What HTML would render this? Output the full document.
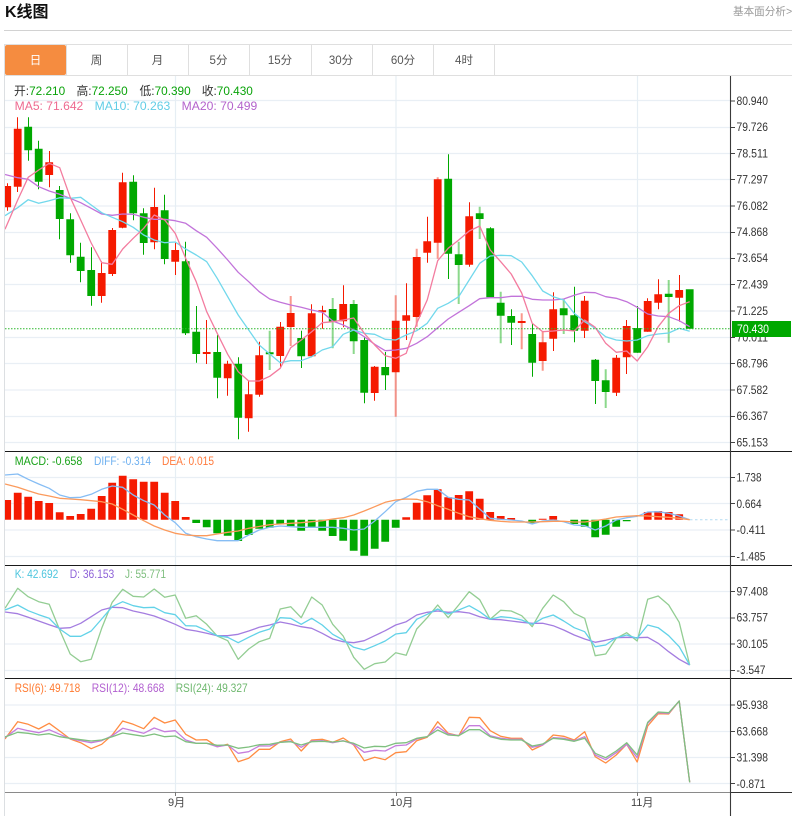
<!DOCTYPE html>
<html lang="zh"><head><meta charset="utf-8"><title>K线图</title>
<style>
html,body{margin:0;padding:0;background:#fff;width:792px;height:816px;overflow:hidden}
svg{display:block}
text{font-family:"Liberation Sans","Noto Sans CJK SC",sans-serif}
.ax text{font-size:11.5px;fill:#333}
.l{fill:none;stroke-width:1.3;stroke-linejoin:round}
.tab{font-size:11.5px;fill:#555;text-anchor:middle}
.lg{font-size:11.8px}
</style></head><body>
<svg width="792" height="816" viewBox="0 0 792 816" xmlns="http://www.w3.org/2000/svg">
<defs><clipPath id="c"><rect x="5" y="76" width="725.5" height="716"/></clipPath></defs>
<rect width="792" height="816" fill="#fff"/>
<text x="5" y="17" style="font-size:16px;font-weight:700" fill="#111">K线图</text>
<text x="733" y="15" style="font-size:10.6px" fill="#999">基本面分析&gt;</text>
<path d="M4 30.5H792" stroke="#d2d2d2"/>
<!-- tabs -->
<path d="M4 44.5H792M4 75.5H792" stroke="#dfdfdf"/>
<path d="M4.5 44V816" stroke="#dcdfe2"/>
<path d="M66.5 45V75M127.5 45V75M188.5 45V75M249.5 45V75M311.5 45V75M372.5 45V75M433.5 45V75M494.5 45V75" stroke="#dfdfdf"/>
<rect x="5" y="45" width="61" height="30" rx="2" fill="#f58c40"/>
<text class="tab" x="35.5" y="64" style="fill:#fff">日</text>
<text class="tab" x="96.5" y="64">周</text>
<text class="tab" x="157.5" y="64">月</text>
<text class="tab" x="218.5" y="64">5分</text>
<text class="tab" x="280" y="64">15分</text>
<text class="tab" x="341" y="64">30分</text>
<text class="tab" x="403" y="64">60分</text>
<text class="tab" x="464" y="64">4时</text>
<!-- grid -->
<path d="M5 100.5H730M5 127.5H730M5 153.5H730M5 179.5H730M5 206H730M5 232.5H730M5 258.5H730M5 284.5H730M5 311H730M5 337.5H730M5 363.5H730M5 390H730M5 416.5H730M5 442.5H730M5 477.5H730M5 503.5H730M5 530H730M5 556.5H730M5 591.5H730M5 618H730M5 644H730M5 670.5H730M5 705H730M5 731.5H730M5 757.5H730M5 783.5H730" stroke="#e9eff5" stroke-width="1.2"/>
<path d="M175.5 76V792M396 76V792M637.5 76V792" stroke="#e6eef4" stroke-width="1.2"/>
<g clip-path="url(#c)">
<path fill="none" stroke="#f51a00" d="M7.5 183.3V210.7M17.5 117.3V192M49.5 151V187.3M101.5 261.3V302.7M112.5 228V276M122.5 172.7V228.3M154.5 187.7V249.3M175.5 242.7V275M206.5 320V364M227.5 360.7V395.7M248.5 380.7V431.7M259.5 341.7V396.7M280.5 322V366.7M311.5 304.3V357.3M322.5 305.7V328.7M343.5 285.3V327.3M374.5 366V400.7M406.5 283.3V340M427.5 216.7V262.7M469.5 202.3V266.7M553.5 292.3V351M584.5 296V338M616.5 355V396M626.5 320V374M647.5 298.3V331.7M658.5 279.3V309.3M679.5 275V321.7"/>
<path fill="none" stroke="#f51a00" stroke-width="2" stroke-opacity=".45" d="M290.7 296V346M395.7 295.3V416.7M416.7 248.7V326.7M437.7 177.3V258.7M521.7 313.3V349.3M542.7 331.7V370.7"/>
<path fill="none" stroke="#00a800" d="M28.5 117.3V160.7M38.5 140.7V189.3M59.5 186V239.3M70.5 213.3V262.7M80.5 242.7V282.3M91.5 247.3V305.7M133.5 175.3V220.3M143.5 208.3V254.7M164.5 194.7V264.3M185.5 241.7V335M196.5 306V362.7M217.5 335V398.3M238.5 357.3V439.3M301.5 330.7V368M364.5 337.3V403.3M385.5 352V390M448.5 154.3V279M490.5 227.3V298M511.5 309.3V345M532.5 323.3V376.7M574.5 286.7V342.3M595.5 359V404M637.5 306V352.7"/>
<path fill="none" stroke="#00a800" stroke-width="2" stroke-opacity=".45" d="M269.7 330.7V370M332.7 298V348.3M353.7 300V354M458.7 241.7V304M479.7 206.7V239M500.7 291.7V343.3M563.7 299V334M605.7 369.3V408M668.7 280V342.7"/>
<path fill="none" stroke="#f51a00" stroke-width="7.8" d="M7.2 186V207.3M17.7 128.7V186.7M49.2 162.3V175M101.7 273V296M112.2 230V274M122.7 182.3V227.7M154.2 207V242.3M175.2 250V261.7M206.7 352V354M227.7 363.7V378.3M248.7 394.3V418.3M259.2 355.3V394.7M280.2 326.7V356M290.7 313V327M311.7 313.3V356.3M322.2 310.3V312.3M343.2 304V321.3M374.7 366.7V393M395.7 320.7V372.3M406.2 315.3V320.7M416.7 257V317M427.2 241.3V252.7M437.7 179.3V242.7M469.2 216.3V264.7M521.7 321V323M542.7 342.3V361M553.2 309.3V338.7M584.7 300.7V330.7M616.2 357.7V392.7M626.7 326V357.3M647.7 301V331.7M658.2 294.3V302.7M679.2 290V297.7"/>
<path fill="none" stroke="#00a800" stroke-width="7.8" d="M28.2 126.7V150.3M38.7 148.7V181.7M59.7 190V219M70.2 219.3V255.3M80.7 256.7V271M91.2 270V296M133.2 181.7V213.3M143.7 213.3V243M164.7 210.3V259M185.7 261.3V333.3M196.2 331.7V354M217.2 352V377.7M238.2 363.7V417.7M269.7 352.3V354.3M301.2 338V356.3M332.7 309V321.7M353.7 304V341.3M364.2 340V392.7M385.2 367V375.3M448.2 178.7V253.7M458.7 254.3V265M479.7 213.3V219M490.2 228.3V297.3M500.7 302.7V315.7M511.2 316V322.7M532.2 334V362.7M563.7 308.3V315.3M574.2 315.3V330.7M595.2 359.7V381M605.7 380.3V392M637.2 328V352.7M668.7 293.7V297M689.7 289.3V328.7"/>
<polyline class="l" stroke="#c274da" points="5,174.5 17.7,177.7 28.2,179.3 38.7,186.7 49.2,191 59.7,194.3 70.2,198.3 80.7,202.7 91.2,208.3 101.7,214 112.2,215.3 122.7,214 133.2,214.3 143.7,217.3 154.2,219.3 164.7,219.3 175.2,220.7 185.7,223.3 196.2,230.7 206.7,237.3 217.2,248.3 227.7,260 238.2,272.3 248.7,281.7 259.2,291.7 269.7,299 280.2,302.3 290.7,305 301.2,307.3 311.7,310 322.2,312.3 332.7,321 343.2,325 353.7,330 364.2,336.7 374.7,344.3 385.2,350.7 395.7,350 406.2,348.3 416.7,343.3 427.2,336.7 437.7,327.7 448.2,319 458.7,312.3 469.2,305.7 479.7,298.7 490.2,297.7 500.7,297.7 511.2,296.3 521.7,296.3 532.2,299.3 542.7,300 553.2,300 563.7,299 574.2,295.3 584.7,292.3 595.2,292.7 605.7,296.7 616.2,298.3 626.7,301.7 637.2,307.3 647.7,314 658.2,316 668.7,316.7 679.2,320.7 689.7,326.7"/>
<polyline class="l" stroke="#72d8ec" points="5,215.7 17.7,207.7 28.2,199.7 38.7,203.3 49.2,200.7 59.7,197.7 70.2,198.3 80.7,197.3 91.2,205 101.7,212.7 112.2,217.3 122.7,221.7 133.2,227.3 143.7,235 154.2,240 164.7,242.7 175.2,242 185.7,249 196.2,255 206.7,261.7 217.2,278.3 227.7,296.7 238.2,315 248.7,330 259.2,345 269.7,354 280.2,362.7 290.7,360.7 301.2,360.7 311.7,356.7 322.2,350 332.7,346.7 343.2,334.3 353.7,330 364.2,333.3 374.7,334.3 385.2,339.3 395.7,340 406.2,335 416.7,330.7 427.2,323.3 437.7,308.3 448.2,303.3 458.7,296.7 469.2,280 479.7,263.3 490.2,256 500.7,255.3 511.2,255.7 521.7,262 532.2,275.7 542.7,291 553.2,296.7 563.7,300 574.2,313.3 584.7,321.7 595.2,328.3 605.7,336.7 616.2,340 626.7,341 637.2,340 647.7,335.7 658.2,334 668.7,333 679.2,328.3 689.7,331.3"/>
<polyline class="l" stroke="#f37c9f" points="5,229.3 17.7,200 28.2,177.3 38.7,170 49.2,163.3 59.7,167.7 70.2,197.3 80.7,220 91.2,243 101.7,262.7 112.2,264.3 122.7,249 133.2,238.3 143.7,228.3 154.2,215 164.7,220 175.2,233.3 185.7,258.3 196.2,281.7 206.7,311.7 217.2,333.3 227.7,354.3 238.2,371.7 248.7,381 259.2,381 269.7,376.3 280.2,368.3 290.7,347.7 301.2,340 311.7,331.7 322.2,322.7 332.7,321.7 343.2,320 353.7,318 364.2,333.3 374.7,345 385.2,355.7 395.7,358.3 406.2,353.3 416.7,323.3 427.2,300 437.7,260.7 448.2,248.3 458.7,240 469.2,231 479.7,226 490.2,250 500.7,261.7 511.2,274 521.7,293 532.2,323.3 542.7,331.7 553.2,331 563.7,330 574.2,331 584.7,320 595.2,327.3 605.7,343.3 616.2,352.3 626.7,351 637.2,361 647.7,346.7 658.2,326.7 668.7,313.3 679.2,305.7 689.7,301.7"/>
<path d="M5 328.7H730" stroke="#2fb82f" stroke-dasharray="1.5 1.5" fill="none"/>
<!-- MACD bars -->
<path fill="none" stroke="#f51a00" stroke-width="7.8" d="M7.2 519.7V500M17.7 519.7V492.7M28.2 519.7V496.7M38.7 519.7V501M49.2 519.7V503M59.7 519.7V512.3M70.2 519.7V516M80.7 519.7V514M91.2 519.7V508.7M101.7 519.7V496M112.2 519.7V482.7M122.7 519.7V475.7M133.2 519.7V479.3M143.7 519.7V481.7M154.2 519.7V481.7M164.7 519.7V492.7M175.2 519.7V501M185.7 519.7V517M406.2 519.7V517.3M416.7 519.7V502.7M427.2 519.7V495.3M437.7 519.7V489.3M448.2 519.7V497.3M458.7 519.7V495M469.2 519.7V491.3M479.7 519.7V498.7M490.2 519.7V512M500.7 519.7V516M511.2 519.7V518M542.7 519.7V518.7M553.2 519.7V516M647.7 519.7V512M658.2 519.7V511M668.7 519.7V512M679.2 519.7V514.3"/>
<path fill="none" stroke="#00a800" stroke-width="7.8" d="M196.2 519.7V523M206.7 519.7V527.3M217.2 519.7V533.3M227.7 519.7V535.7M238.2 519.7V541M248.7 519.7V535M259.2 519.7V528.7M269.7 519.7V527.7M280.2 519.7V524.3M290.7 519.7V526.3M301.2 519.7V530.7M311.7 519.7V527M322.2 519.7V530.7M332.7 519.7V536M343.2 519.7V540.7M353.7 519.7V550.7M364.2 519.7V555.7M374.7 519.7V548.7M385.2 519.7V541.7M395.7 519.7V527.7M532.2 519.7V523.3M574.2 519.7V524M584.7 519.7V526.7M595.2 519.7V537.3M605.7 519.7V534.7M616.2 519.7V526.7M626.7 520V521.3"/>
<path d="M690 519.7H730" stroke="#b4dcf2" stroke-dasharray="2.5 2.5" fill="none"/>
<polyline class="l" stroke="#86bdf4" points="5,475 17.7,474 28.2,479.3 38.7,484 49.2,488.3 59.7,495 70.2,497.7 80.7,497.3 91.2,494.3 101.7,489.3 112.2,486 122.7,487.3 133.2,495 143.7,500.7 154.2,505 164.7,515 175.2,522.7 185.7,533.3 196.2,536.7 206.7,539 217.2,540.7 227.7,540.7 238.2,540.7 248.7,535 259.2,530 269.7,527.3 280.2,526 290.7,526.7 301.2,527.3 311.7,527.3 322.2,527.3 332.7,527.3 343.2,528.3 353.7,530 364.2,529 374.7,521 385.2,511.7 395.7,501.7 406.2,497.3 416.7,491.3 427.2,489.3 437.7,489.3 448.2,497.3 458.7,499.3 469.2,500 479.7,509 490.2,518.3 500.7,519.3 511.2,520 521.7,521 532.2,524 542.7,521 553.2,520 563.7,521.7 574.2,525 584.7,525.7 595.2,530 605.7,526 616.2,520 626.7,517.7 637.2,516.3 647.7,512 658.2,511.7 668.7,513.3 679.2,516 689.7,519.7"/>
<polyline class="l" stroke="#fb9a5c" points="5,484 17.7,487.3 28.2,490.7 38.7,494 49.2,496 59.7,498.3 70.2,499 80.7,499.7 91.2,500.7 101.7,501.7 112.2,504 122.7,509.3 133.2,515 143.7,520.7 154.2,526 164.7,530 175.2,533.3 185.7,535 196.2,535.7 206.7,535.7 217.2,534 227.7,532.3 238.2,531 248.7,528.3 259.2,526.5 269.7,524.7 280.2,524 290.7,523.3 301.2,522.7 311.7,521.7 322.2,520.7 332.7,519 343.2,517.7 353.7,515 364.2,511 374.7,506.7 385.2,502.3 395.7,500 406.2,499 416.7,499.3 427.2,501.7 437.7,505.7 448.2,509.3 458.7,513.3 469.2,516.7 479.7,518.7 490.2,520.3 500.7,521.3 511.2,522 521.7,522 532.2,522 542.7,521.7 553.2,521.3 563.7,521.3 574.2,522 584.7,522 595.2,520.7 605.7,519 616.2,517 626.7,516.3 637.2,515.7 647.7,516 658.2,516.7 668.7,517.3 679.2,518.3 689.7,519.7"/>
<!-- KDJ -->
<polyline class="l" stroke="#93cd93" points="5,608.3 17.7,588.3 28.2,596.7 38.7,601.7 49.2,604.3 59.7,630 70.2,654 80.7,661.7 91.2,659.3 101.7,628.3 112.2,602.3 122.7,589.3 133.2,596.3 143.7,597 154.2,589 164.7,597.3 175.2,595 185.7,618.3 196.2,615.7 206.7,624.3 217.2,636 227.7,640.7 238.2,659.3 248.7,649 259.2,641.7 269.7,638.3 280.2,609 290.7,606.7 301.2,617.7 311.7,597 322.2,605 332.7,624.3 343.2,636 353.7,657.3 364.2,669.3 374.7,663.7 385.2,662 395.7,652.7 406.2,655.3 416.7,629 427.2,617.7 437.7,605 448.2,617.7 458.7,605 469.2,591.7 479.7,599.7 490.2,619.3 500.7,610.3 511.2,611 521.7,615.7 532.2,626.7 542.7,608.3 553.2,595 563.7,601.7 574.2,613.3 584.7,618.3 595.2,655.7 605.7,654 616.2,638.3 626.7,632.7 637.2,641 647.7,599.3 658.2,596 668.7,605 679.2,622.3 689.7,665"/>
<polyline class="l" stroke="#a47de0" points="5,612 17.7,613.7 28.2,617.3 38.7,621 49.2,624.7 59.7,628.3 70.2,627.7 80.7,623.3 91.2,616.7 101.7,610 112.2,607.3 122.7,607.7 133.2,611 143.7,613.3 154.2,616 164.7,620 175.2,624.3 185.7,629.3 196.2,631 206.7,633.3 217.2,635.7 227.7,635.7 238.2,634.3 248.7,631 259.2,627.3 269.7,625 280.2,622 290.7,624 301.2,626.7 311.7,628.3 322.2,633.3 332.7,639 343.2,641.7 353.7,642.7 364.2,640.7 374.7,635.7 385.2,630.7 395.7,625 406.2,621.7 416.7,615 427.2,612.3 437.7,611 448.2,612.3 458.7,611.7 469.2,613 479.7,616.7 490.2,619.3 500.7,619.7 511.2,621 521.7,622.3 532.2,623.3 542.7,623.3 553.2,625.7 563.7,630 574.2,635 584.7,639 595.2,642.3 605.7,640.3 616.2,637.7 626.7,637.3 637.2,637.7 647.7,637.3 658.2,643.3 668.7,651.7 679.2,659.3 689.7,665"/>
<polyline class="l" stroke="#62d2e8" points="5,610 17.7,605 28.2,610.7 38.7,614.7 49.2,618.3 59.7,629 70.2,636.3 80.7,636.3 91.2,631 101.7,619 112.2,606.7 122.7,601.7 133.2,605.7 143.7,607.7 154.2,607.3 164.7,612.7 175.2,614.7 185.7,625.7 196.2,626 206.7,630.7 217.2,635.7 227.7,637.3 238.2,642.7 248.7,637.3 259.2,632.3 269.7,629 280.2,617.7 290.7,618.3 301.2,624.3 311.7,618.3 322.2,625 332.7,634.3 343.2,640 353.7,647.3 364.2,650 374.7,645.7 385.2,641 395.7,634 406.2,632.7 416.7,619.3 427.2,614.3 437.7,609 448.2,614 458.7,610 469.2,605.7 479.7,611.7 490.2,619.3 500.7,616.7 511.2,617.7 521.7,620 532.2,624.3 542.7,618.3 553.2,615 563.7,621 574.2,627.7 584.7,631.7 595.2,646.7 605.7,645 616.2,637.7 626.7,635 637.2,638.3 647.7,625 658.2,627.7 668.7,635.7 679.2,646.7 689.7,665"/>
<!-- RSI -->
<polyline class="l" stroke="#ff8c42" points="5,739 17.7,721.7 28.2,724.3 38.7,729 49.2,723.3 59.7,731 70.2,739 80.7,742.7 91.2,748.7 101.7,744.3 112.2,735 122.7,721 133.2,724.3 143.7,728.7 154.2,717.3 164.7,723 175.2,720 185.7,734.3 196.2,740 206.7,739.7 217.2,746.7 227.7,744.3 238.2,761.7 248.7,758.3 259.2,749.3 269.7,749.3 280.2,741.7 290.7,739 301.2,751 311.7,740 322.2,739.3 332.7,742.3 343.2,738 353.7,745 364.2,760.7 374.7,757.3 385.2,759.7 395.7,752.7 406.2,751.7 416.7,740.7 427.2,737.3 437.7,721.7 448.2,733.3 458.7,735.7 469.2,717.3 479.7,717.7 490.2,730.7 500.7,736.3 511.2,738.3 521.7,738.3 532.2,750 542.7,745 553.2,735 563.7,736.3 574.2,740 584.7,731.7 595.2,756.7 605.7,763 616.2,755 626.7,744.3 637.2,762 647.7,726 658.2,713.7 668.7,714 679.2,701 689.7,782.3"/>
<polyline class="l" stroke="#c67edc" points="5,737.7 17.7,728.3 28.2,730.7 38.7,732.7 49.2,729.7 59.7,734.3 70.2,738.7 80.7,740.7 91.2,742.7 101.7,740.7 112.2,735.7 122.7,728.3 133.2,730.7 143.7,733.3 154.2,728 164.7,731.7 175.2,730.7 185.7,740 196.2,743.3 206.7,743.3 217.2,746.7 227.7,745 238.2,753.3 248.7,751.7 259.2,746 269.7,746 280.2,742.3 290.7,741 301.2,747.3 311.7,741 322.2,740.7 332.7,742.7 343.2,740.7 353.7,744.3 364.2,752.3 374.7,750.3 385.2,751 395.7,745.7 406.2,745 416.7,739 427.2,736.7 437.7,726.7 448.2,734 458.7,735.7 469.2,725.7 479.7,725.7 490.2,735.7 500.7,738.3 511.2,739.3 521.7,739.3 532.2,747.3 542.7,745 553.2,737.7 563.7,738.3 574.2,740.7 584.7,736.7 595.2,755 605.7,759.7 616.2,752.7 626.7,744.3 637.2,757.7 647.7,723.3 658.2,712.7 668.7,713.3 679.2,701 689.7,782.3"/>
<polyline class="l" stroke="#7fc07f" points="5,737 17.7,732.3 28.2,733.3 38.7,735 49.2,733.7 59.7,736.7 70.2,738.3 80.7,739.7 91.2,741 101.7,740 112.2,736.7 122.7,733 133.2,734.7 143.7,736.3 154.2,734 164.7,736.7 175.2,736 185.7,741.7 196.2,743.3 206.7,743.3 217.2,745.3 227.7,745 238.2,748.3 248.7,747 259.2,744.7 269.7,744.3 280.2,742.3 290.7,741.7 301.2,745 311.7,741.7 322.2,741.3 332.7,742 343.2,741 353.7,743.3 364.2,748 374.7,746.3 385.2,746.7 395.7,743.3 406.2,742.7 416.7,738.3 427.2,736.7 437.7,730 448.2,735 458.7,735.7 469.2,729.7 479.7,729.7 490.2,736.7 500.7,739.3 511.2,740 521.7,740 532.2,746 542.7,744 553.2,738.3 563.7,739.3 574.2,741.3 584.7,738.3 595.2,753.3 605.7,757.7 616.2,751 626.7,742.7 637.2,755 647.7,722.3 658.2,712 668.7,712.7 679.2,701 689.7,782.3"/>
</g>
<!-- frame lines -->
<path d="M5 451.5H792M5 565.5H792M5 678.5H792" stroke="#1a1a1a"/>
<path d="M5 792.5H730" stroke="#8a8a8a"/>
<path d="M730 792.5H792" stroke="#333"/>
<path d="M730.5 76V816" stroke="#3a3a3a" stroke-width="1.1"/>
<path d="M175.5 792V796M396.5 792V796M637.5 792V796" stroke="#777"/>
<path d="M731 101H735M731 127.5H735M731 153.5H735M731 179.5H735M731 206H735M731 232.5H735M731 258.5H735M731 284.5H735M731 311H735M731 337.5H735M731 363.5H735M731 390H735M731 416.5H735M731 442.5H735M731 477.5H735M731 503.5H735M731 530H735M731 556.5H735M731 591.5H735M731 618H735M731 644H735M731 670.5H735M731 705H735M731 731.5H735M731 757.5H735M731 783.5H735" stroke="#444"/>
<g class="ax">
<text x="736.5" y="105" textLength="31.5" lengthAdjust="spacingAndGlyphs">80.940</text>
<text x="736.5" y="131" textLength="31.5" lengthAdjust="spacingAndGlyphs">79.726</text>
<text x="736.5" y="157.5" textLength="31.5" lengthAdjust="spacingAndGlyphs">78.511</text>
<text x="736.5" y="183.5" textLength="31.5" lengthAdjust="spacingAndGlyphs">77.297</text>
<text x="736.5" y="210" textLength="31.5" lengthAdjust="spacingAndGlyphs">76.082</text>
<text x="736.5" y="236" textLength="31.5" lengthAdjust="spacingAndGlyphs">74.868</text>
<text x="736.5" y="262" textLength="31.5" lengthAdjust="spacingAndGlyphs">73.654</text>
<text x="736.5" y="288.5" textLength="31.5" lengthAdjust="spacingAndGlyphs">72.439</text>
<text x="736.5" y="315" textLength="31.5" lengthAdjust="spacingAndGlyphs">71.225</text>
<text x="736.5" y="341.5" textLength="31.5" lengthAdjust="spacingAndGlyphs">70.011</text>
<text x="736.5" y="367.5" textLength="31.5" lengthAdjust="spacingAndGlyphs">68.796</text>
<text x="736.5" y="394" textLength="31.5" lengthAdjust="spacingAndGlyphs">67.582</text>
<text x="736.5" y="420" textLength="31.5" lengthAdjust="spacingAndGlyphs">66.367</text>
<text x="736.5" y="446.5" textLength="31.5" lengthAdjust="spacingAndGlyphs">65.153</text>
<text x="736.5" y="481.5" textLength="25" lengthAdjust="spacingAndGlyphs">1.738</text>
<text x="736.5" y="508" textLength="25" lengthAdjust="spacingAndGlyphs">0.664</text>
<text x="736.5" y="534" textLength="29" lengthAdjust="spacingAndGlyphs">-0.411</text>
<text x="736.5" y="560.5" textLength="29" lengthAdjust="spacingAndGlyphs">-1.485</text>
<text x="736.5" y="595.5" textLength="31.5" lengthAdjust="spacingAndGlyphs">97.408</text>
<text x="736.5" y="621.5" textLength="31.5" lengthAdjust="spacingAndGlyphs">63.757</text>
<text x="736.5" y="648" textLength="31.5" lengthAdjust="spacingAndGlyphs">30.105</text>
<text x="736.5" y="674" textLength="29" lengthAdjust="spacingAndGlyphs">-3.547</text>
<text x="736.5" y="709" textLength="31.5" lengthAdjust="spacingAndGlyphs">95.938</text>
<text x="736.5" y="735.5" textLength="31.5" lengthAdjust="spacingAndGlyphs">63.668</text>
<text x="736.5" y="761.5" textLength="31.5" lengthAdjust="spacingAndGlyphs">31.398</text>
<text x="736.5" y="788" textLength="29" lengthAdjust="spacingAndGlyphs">-0.871</text>
</g>
<rect x="732" y="321" width="59" height="16" fill="#00a800"/>
<text x="737" y="333" style="font-size:11.5px" fill="#fff" textLength="32" lengthAdjust="spacingAndGlyphs">70.430</text>
<!-- x labels -->
<g style="font-size:11px" fill="#444">
<text x="168" y="806">9月</text>
<text x="390" y="806">10月</text>
<text x="631" y="806">11月</text>
</g>
<!-- legends -->
<g class="lg">
<text x="14" y="95" fill="#333">开:<tspan fill="#0aa30a">72.210</tspan></text>
<text x="76.5" y="95" fill="#333">高:<tspan fill="#0aa30a">72.250</tspan></text>
<text x="139.5" y="95" fill="#333">低:<tspan fill="#0aa30a">70.390</tspan></text>
<text x="201.7" y="95" fill="#333">收:<tspan fill="#0aa30a">70.430</tspan></text>
<text x="14.7" y="110" fill="#ee6a90" textLength="68.6" lengthAdjust="spacingAndGlyphs">MA5: 71.642</text>
<text x="94.7" y="110" fill="#62cde6" textLength="75.6" lengthAdjust="spacingAndGlyphs">MA10: 70.263</text>
<text x="181.7" y="110" fill="#b463cc" textLength="75.6" lengthAdjust="spacingAndGlyphs">MA20: 70.499</text>
<text x="14.7" y="465" fill="#1aa31a" textLength="67.6" lengthAdjust="spacingAndGlyphs">MACD: -0.658</text>
<text x="94" y="465" fill="#6eb0f0" textLength="57" lengthAdjust="spacingAndGlyphs">DIFF: -0.314</text>
<text x="162" y="465" fill="#ff7a3c" textLength="52" lengthAdjust="spacingAndGlyphs">DEA: 0.015</text>
<text x="14.7" y="578" fill="#4fc6de" textLength="43.6" lengthAdjust="spacingAndGlyphs">K: 42.692</text>
<text x="69.7" y="578" fill="#8e62d8" textLength="44.6" lengthAdjust="spacingAndGlyphs">D: 36.153</text>
<text x="125" y="578" fill="#7cbd7c" textLength="41" lengthAdjust="spacingAndGlyphs">J: 55.771</text>
<text x="14.7" y="692" fill="#ff7a30" textLength="65.6" lengthAdjust="spacingAndGlyphs">RSI(6): 49.718</text>
<text x="91.7" y="692" fill="#b260d0" textLength="72.6" lengthAdjust="spacingAndGlyphs">RSI(12): 48.668</text>
<text x="175.7" y="692" fill="#6fb86f" textLength="72" lengthAdjust="spacingAndGlyphs">RSI(24): 49.327</text>
</g>
</svg>
</body></html>
